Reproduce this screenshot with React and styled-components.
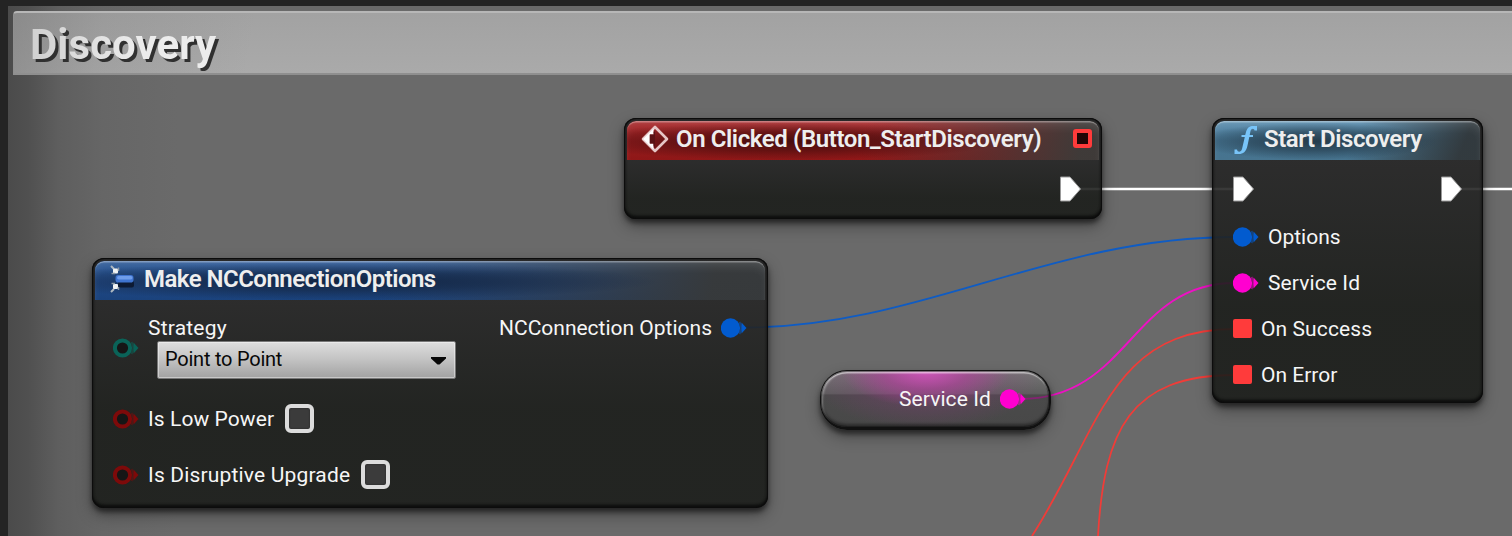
import React from "react";
import styled, { createGlobalStyle, css } from "styled-components";

const GlobalStyle = createGlobalStyle`
  * { box-sizing: border-box; }
  body { margin: 0; background: #242424; overflow: hidden; }
`;

const Graph = styled.main`
  position: relative;
  width: 1512px;
  height: 536px;
  padding: 6px 0 0 8px;
  overflow: hidden;
  background: #242424;
  font-family: Roboto, "Liberation Sans", sans-serif;
`;

const Comment = styled.section`
  height: 530px;
  padding: 5px 0 0 5px;
  background: linear-gradient(90deg, #4b4b4b 0, #505050 20px, #5e5e5e 50px, #666 95px, #6a6a6a 170px);
`;

const CommentTitle = styled.header`
  height: 64px;
  padding: 0 0 0 16px;
  border: solid #8f8f8f;
  border-width: 2px 0 2px 1px;
  border-top-color: #b7b7b7;
  border-radius: 4px 0 0 0;
  background: linear-gradient(100deg, rgba(110, 110, 110, 0.45), rgba(110, 110, 110, 0.15) 90px, rgba(110, 110, 110, 0) 240px),
    linear-gradient(#a2a2a2, #aaa);
`;

const CommentText = styled.h1`
  margin: 0;
  width: max-content;
  font-size: 42px;
  line-height: 64px;
  font-weight: 700;
  letter-spacing: 0.05px;
  color: transparent;
  background: linear-gradient(90deg, #d0d0d0, #ececec 60%);
  background-clip: text;
  -webkit-background-clip: text;
  filter: drop-shadow(3px 3px 0 #303030);
`;

const Wires = styled.svg`
  position: absolute;
  inset: 0;
  fill: none;
`;

const Node = styled.article`
  position: absolute;
  left: ${(p) => p.$x}px;
  top: ${(p) => p.$y}px;
  width: ${(p) => p.$w}px;
  height: ${(p) => p.$h}px;
  padding: 3px;
  border-radius: 12px;
  background: linear-gradient(rgba(38, 38, 38, 0.9) 42px, rgba(27, 29, 26, 0.9) ${(p) => p.$fade || 80}px);
  box-shadow: inset 0 0 0 1px #0c0c0c, inset 0 0 3px 1px #111, inset 0 -3px 3px #0b0c0b,
    0 4px 5px rgba(0, 0, 0, 0.5), 0 7px 15px rgba(0, 0, 0, 0.35);
`;

const tints = {
  red: css`
    background: radial-gradient(ellipse 46% 48% at 34% 52%, rgba(62, 12, 12, 0.9), rgba(70, 12, 12, 0.6) 50%, transparent),
      linear-gradient(100deg, transparent 50%, rgba(58, 60, 58, 0.95) 96%),
      linear-gradient(#a92a2c, #951d1f 50%, #8f1717);
  `,
  blue: css`
    background: radial-gradient(ellipse 48% 48% at 36% 52%, rgba(16, 32, 58, 0.9), rgba(18, 36, 64, 0.6) 50%, transparent),
      linear-gradient(98deg, transparent 42%, rgba(56, 57, 56, 0.95) 92%),
      linear-gradient(#2f5c99, #224a86 50%, #1a427c);
  `,
  sky: css`
    background: radial-gradient(ellipse 46% 48% at 38% 52%, rgba(34, 54, 68, 0.9), rgba(36, 58, 74, 0.6) 50%, transparent),
      linear-gradient(112deg, transparent 52%, rgba(48, 52, 54, 0.9) 92%),
      linear-gradient(#5c8fb0, #457390 50%, #47748f);
  `,
};

const NodeHeader = styled.header`
  display: flex;
  align-items: center;
  height: 39px;
  padding: 0 7px 0 ${(p) => p.$left}px;
  border-radius: 9px 9px 0 0;
  box-shadow: inset 0 2px 1px -0.5px rgba(255, 255, 255, 0.35), inset 0 8px 10px -3px rgba(255, 255, 255, 0.12);
  ${(p) => tints[p.$tint]}
`;

const NodeTitle = styled.h2`
  margin: 0 auto 3px ${(p) => p.$gap}px;
  font-size: 24px;
  line-height: 28px;
  font-weight: 600;
  letter-spacing: ${(p) => p.$spacing}px;
  white-space: nowrap;
  color: #eee;
`;

const DelegatePin = styled.span`
  width: 19px;
  height: 19px;
  margin: 0 0 4px;
  border: 4px solid #ff3b3b;
  border-radius: 3px;
  background: #220606;
`;

const ExecRow = styled.div`
  display: flex;
  justify-content: ${(p) => (p.$end ? "flex-end" : "space-between")};
  padding: 16px 17px 0 17px;
  height: 54px;
`;

const PinList = styled.div`
  display: flex;
  flex-direction: column;
`;

const PinRow = styled.div`
  display: flex;
  align-items: center;
  height: 46px;
  padding-left: 18px;
`;

const Label = styled.span`
  font-size: 21px;
  line-height: 26px;
  letter-spacing: ${(p) => p.$spacing || 0}px;
  white-space: nowrap;
  color: #f6f6f6;
`;

const SquarePin = styled.span`
  width: 19px;
  height: 19px;
  margin: 0 9px 1px 0;
  border-radius: 2px;
  background: #ff3b3b;
`;

const StructBody = styled.div`
  display: flex;
  justify-content: space-between;
  padding: 15px 18px 0 17px;
`;

const Inputs = styled.div`
  display: flex;
  flex-direction: column;
`;

const InputRow = styled.div`
  display: flex;
  align-items: center;
  height: ${(p) => p.$h}px;
`;

const Field = styled.div`
  display: flex;
  flex-direction: column;
`;

const Select = styled.div`
  display: flex;
  align-items: center;
  justify-content: space-between;
  width: 299px;
  height: 38px;
  margin: 0 0 0 9px;
  padding: 0 9px 2px 7px;
  border: 1px solid #777;
  border-radius: 2px;
  box-shadow: inset 0 0 0 1px rgba(255, 255, 255, 0.4);
  background: linear-gradient(#dedede, #c5c5c5 45%, #a2a2a2);
  font-size: 20px;
  letter-spacing: -0.23px;
  color: #080808;
`;

const Checkbox = styled.span`
  width: 29px;
  height: 29px;
  margin: 0 0 1px 11px;
  border: 4px solid #dcdcdc;
  border-radius: 6px;
  background: #3b3b3b;
  box-shadow: inset 0 0 2px #222;
`;

const Output = styled.div`
  display: flex;
  align-items: center;
  gap: 9px;
  height: 26px;
`;

const Variable = styled.article`
  position: absolute;
  left: 820px;
  top: 370px;
  width: 231px;
  height: 60px;
  display: flex;
  align-items: center;
  justify-content: flex-end;
  gap: 9px;
  padding: 0 23px 0 0;
  border: 1px solid #111;
  border-bottom-width: 3px;
  border-right-width: 2px;
  border-radius: 27px;
  background: radial-gradient(ellipse 85px 36px at 46% 0, rgba(225, 85, 200, 0.8), rgba(190, 65, 165, 0.5) 50%, transparent),
    radial-gradient(ellipse 115px 52px at 46% 12%, rgba(150, 55, 135, 0.5), transparent),
    linear-gradient(rgba(128, 128, 128, 0.55), rgba(84, 84, 84, 0.55) 40%, rgba(48, 48, 48, 0.55) 43%, rgba(44, 44, 44, 0.55));
  box-shadow: inset 0 0 0 1px rgba(20, 20, 20, 0.5), inset 0 3px 1px -0.5px rgba(255, 255, 255, 0.5),
    inset 3px 2px 2px -1px rgba(255, 255, 255, 0.3), inset 0 -3px 3px rgba(0, 0, 0, 0.4),
    0 4px 5px rgba(0, 0, 0, 0.5), 0 7px 15px rgba(0, 0, 0, 0.3);
`;

const Icon = styled.svg`
  flex: none;
  display: block;
  margin: ${(p) => p.$m || 0};
`;

const ExecPin = () => (
  <Icon width="23" height="26" viewBox="0 0 23 26">
    <path d="M1.500 1H11L21.500 13L11 25H1.500Z" fill="#fff" stroke="#999" strokeWidth="1" strokeLinejoin="round" />
  </Icon>
);

const DataPin = ({ color, hollow, margin }) => (
  <Icon width="26" height="20" viewBox="0 0 26 20" $m={margin}>
    <path d="M20.500 4.500L25.500 10L20.500 15.500Z" fill={color} />
    <circle cx="9.500" cy="10" r={hollow ? 7.6 : 9.7} fill={hollow ? "#161616" : color} stroke={hollow ? color : "none"} strokeWidth="4" />
    <path d="M18.500 4C20.800 8 20.800 12 18.500 16" fill="none" stroke={color} strokeOpacity=".5" strokeWidth="2" />
  </Icon>
);

const EventIcon = () => (
  <Icon width="28" height="28" viewBox="0 0 28 28" $m="0 0 3px">
    <path d="M14 2L26 14L14 26L2 14Z" fill="none" stroke="#e6c6c6" strokeWidth="2.600" strokeLinejoin="round" />
    <path d="M2 14L12.500 3.500V9.500H8.800V18.500H12.500V24.500Z" fill="#fff" />
    <path d="M8.800 9.500H13L12.500 7.500L14 6V22L12.500 20.500V18.500H8.800Z" fill="#5a1214" />
  </Icon>
);

const MakeIcon = () => (
  <Icon width="26" height="28" viewBox="0 0 26 28" $m="0 0 3px">
    <rect x="8" y="16" width="16" height="6.500" rx="2" fill="#0d1a33" />
    <rect x="5.500" y="10" width="18" height="7.500" rx="2.800" fill="#3f74d0" />
    <rect x="7" y="11" width="15.500" height="3.500" rx="1.700" fill="#6f9dea" />
    <path d="M1 1L4 4M1 27L4 24" stroke="#aeb8c0" strokeWidth="2" />
    <rect x="3" y="3.500" width="5" height="5" rx="1" fill="#f2f4f4" />
    <rect x="3" y="19" width="5" height="5" rx="1" fill="#f2f4f4" />
    <path d="M1.500 8.500H5M1.500 18.500H5M8.500 2.500V6M8.500 25V22" stroke="#8f9ba6" strokeWidth="1.500" />
  </Icon>
);

const FunctionIcon = () => (
  <Icon width="26" height="30" viewBox="0 0 26 30" $m="0 0 2px" fill="#78c4f8">
    <path d="M25 1V5.500H22.500C22.500 3.500 19.500 2.500 18.500 6L17.700 10H21V12H17.300L15.500 20.500C14.200 27 11 29 7 29H2.500V24.500H5C5.500 27.500 9 27.500 10 24L12.800 12H9.500V10H13.200L14 7C15.200 2.500 18 1 21 1Z" />
  </Icon>
);

const BLUE = "#025bcf";
const PINK = "#ff00d0";

export default function App() {
  return (
    <>
      <GlobalStyle />
      <Graph>
        <Comment>
          <CommentTitle>
            <CommentText>Discovery</CommentText>
          </CommentTitle>
        </Comment>

        <Wires width="1512" height="536" viewBox="0 0 1512 536">
          <path d="M1080 189H1240M1461 189H1512" stroke="#fff" strokeWidth="2.500" />
          <path d="M745 327.500C920 327.500 1050 237 1235 237" stroke="#0f5cc4" strokeWidth="1.800" />
          <path d="M1235 329C1110 329 1100 430 1032 536" stroke="#f03c38" strokeWidth="1.800" />
          <path d="M1235 375C1130 375 1104 430 1098 536" stroke="#f03c38" strokeWidth="1.800" />
          <path d="M1020 399C1130 399 1130 283 1235 283" stroke="#ee10c4" strokeWidth="1.900" />
        </Wires>

        <Node $x={624} $y={118} $w={478} $h={101}>
          <NodeHeader $tint="red" $left={14}>
            <EventIcon />
            <NodeTitle $gap={7} $spacing={-0.4}>On Clicked (Button_StartDiscovery)</NodeTitle>
            <DelegatePin />
          </NodeHeader>
          <ExecRow $end>
            <ExecPin />
          </ExecRow>
        </Node>

        <Node $x={1212} $y={118} $w={271} $h={285} $fade={190}>
          <NodeHeader $tint="sky" $left={17}>
            <FunctionIcon />
            <NodeTitle $gap={6} $spacing={-0.46}>Start Discovery</NodeTitle>
          </NodeHeader>
          <ExecRow>
            <ExecPin />
            <ExecPin />
          </ExecRow>
          <PinList>
            <PinRow><DataPin color={BLUE} margin="0 9px 0 0" /><Label>Options</Label></PinRow>
            <PinRow><DataPin color={PINK} margin="0 9px 0 0" /><Label $spacing={0.1}>Service Id</Label></PinRow>
            <PinRow><SquarePin /><Label $spacing={0.1}>On Success</Label></PinRow>
            <PinRow><SquarePin /><Label>On Error</Label></PinRow>
          </PinList>
        </Node>

        <Node $x={92} $y={258} $w={676} $h={250} $fade={150}>
          <NodeHeader $tint="blue" $left={15}>
            <MakeIcon />
            <NodeTitle $gap={8} $spacing={-0.53}>Make NCConnectionOptions</NodeTitle>
          </NodeHeader>
          <StructBody>
            <Inputs>
              <InputRow $h={64}>
                <DataPin color="#0a6358" hollow margin="1px 9px 0 1px" />
                <Field>
                  <Label $spacing={0.2}>Strategy</Label>
                  <Select>
                    <span>Point to Point</span>
                    <Icon width="15" height="9" viewBox="0 0 15 9" $m="2px 0 0">
                      <path d="M0 1H15V2.500L8.500 8.500H6.500L0 2.500Z" fill="#080808" />
                    </Icon>
                  </Select>
                </Field>
              </InputRow>
              <InputRow $h={80}>
                <DataPin color="#7d0a0a" hollow margin="0 9px 0 1px" />
                <Label $spacing={0.08}>Is Low Power</Label>
                <Checkbox />
              </InputRow>
              <InputRow $h={32}>
                <DataPin color="#7d0a0a" hollow margin="0 9px 0 1px" />
                <Label $spacing={0.17}>Is Disruptive Upgrade</Label>
                <Checkbox />
              </InputRow>
            </Inputs>
            <Output>
              <Label>NCConnection Options</Label>
              <DataPin color={BLUE} />
            </Output>
          </StructBody>
        </Node>

        <Variable>
          <Label $spacing={0.1}>Service Id</Label>
          <DataPin color={PINK} />
        </Variable>
      </Graph>
    </>
  );
}
